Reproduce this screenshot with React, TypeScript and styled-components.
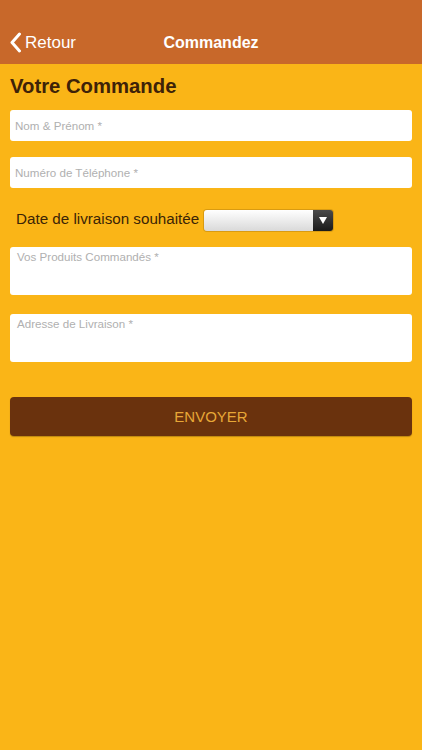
import styled, { createGlobalStyle } from 'styled-components';

const ORANGE = '#FAB517';
const HEADER = '#C8682A';
const BROWN = '#6A320D';

const GlobalStyle = createGlobalStyle`
    html, body {
        margin: 0;
        padding: 0;
        background: ${ORANGE};
        font-family: "Liberation Sans", Arial, sans-serif;
    }
`;

const Page = styled.div`
    min-height: 750px;
    background: ${ORANGE};
    display: flex;
    flex-direction: column;
`;

const NavBar = styled.div`
    height: 64px;
    background: ${HEADER};
    display: flex;
    align-items: flex-end;
    position: relative;
    box-sizing: border-box;
    padding-bottom: 11px;
`;

const Back = styled.div`
    display: flex;
    align-items: center;
    color: #fff;
    font-size: 17px;
    padding-left: 9px;
    gap: 3px;
`;

const NavTitle = styled.div`
    position: absolute;
    left: 0;
    right: 0;
    bottom: 12px;
    text-align: center;
    color: #fff;
    font-weight: bold;
    font-size: 16px;
    pointer-events: none;
`;

const Content = styled.div`
    padding: 10px 10px 0 10px;
    display: flex;
    flex-direction: column;
`;

const Heading = styled.h1`
    margin: 0 0 12px 0;
    font-size: 20.3px;
    font-weight: bold;
    color: #3E2208;
    line-height: 24px;
`;

const Field = styled.div<{ $tall?: boolean }>`
    background: #fff;
    border-radius: 3px;
    height: ${p => (p.$tall ? 48 : 31)}px;
    box-sizing: border-box;
    display: flex;
    align-items: ${p => (p.$tall ? 'flex-start' : 'center')};
    padding: ${p => (p.$tall ? '3px 7px' : '0 5px')};
    color: #b0b0b0;
    font-size: 11.6px;
    margin-bottom: ${p => (p.$tall ? 19 : 16)}px;
`;

const DateRow = styled.div`
    display: flex;
    align-items: center;
    padding-left: 6px;
    margin: 6px 0 16px 0;
    height: 21px;
`;

const DateLabel = styled.span`
    font-size: 15.2px;
    color: #3A2406;
    margin-right: 5px;
    position: relative;
    top: -2px;
`;

const Select = styled.div`
    width: 129px;
    height: 21px;
    display: flex;
    border-radius: 3px;
    overflow: hidden;
    box-shadow: 0 0 0 1px rgba(120, 80, 0, 0.25);
`;

const SelectBody = styled.div`
    flex: 1;
    background: linear-gradient(#ffffff, #d9d9d9);
`;

const SelectArrow = styled.div`
    width: 20px;
    background: linear-gradient(#4a4a4a, #1a1a1a);
    display: flex;
    align-items: center;
    justify-content: center;
`;

export const Submit = styled.button`
    margin-top: 16px;
    height: 39px;
    border: none;
    border-radius: 4px;
    background: ${BROWN};
    color: #E7A737;
    font-family: "Liberation Sans", Arial, sans-serif;
    font-size: 15px;
    box-shadow: 0 1px 1px rgba(0, 0, 0, 0.25);
`;

export default function App() {
    return (
        <Page>
            <GlobalStyle />
            <NavBar>
                <Back>
                    <svg width="13" height="21" viewBox="0 0 13 21">
                        <path d="M10.5 2 L3 10.5 L10.5 19" fill="none" stroke="#fff" strokeWidth="3" strokeLinecap="round" strokeLinejoin="round" />
                    </svg>
                    <span>Retour</span>
                </Back>
                <NavTitle>Commandez</NavTitle>
            </NavBar>
            <Content>
                <Heading>Votre Commande</Heading>
                <Field>Nom &amp; Prénom *</Field>
                <Field>Numéro de Téléphone *</Field>
                <DateRow>
                    <DateLabel>Date de livraison souhaitée</DateLabel>
                    <Select>
                        <SelectBody />
                        <SelectArrow>
                            <svg width="8" height="7" viewBox="0 0 8 7">
                                <path d="M0 0 H8 L4 7 Z" fill="#fff" />
                            </svg>
                        </SelectArrow>
                    </Select>
                </DateRow>
                <Field $tall>Vos Produits Commandés *</Field>
                <Field $tall>Adresse de Livraison *</Field>
                <Submit>ENVOYER</Submit>
            </Content>
        </Page>
    );
}
